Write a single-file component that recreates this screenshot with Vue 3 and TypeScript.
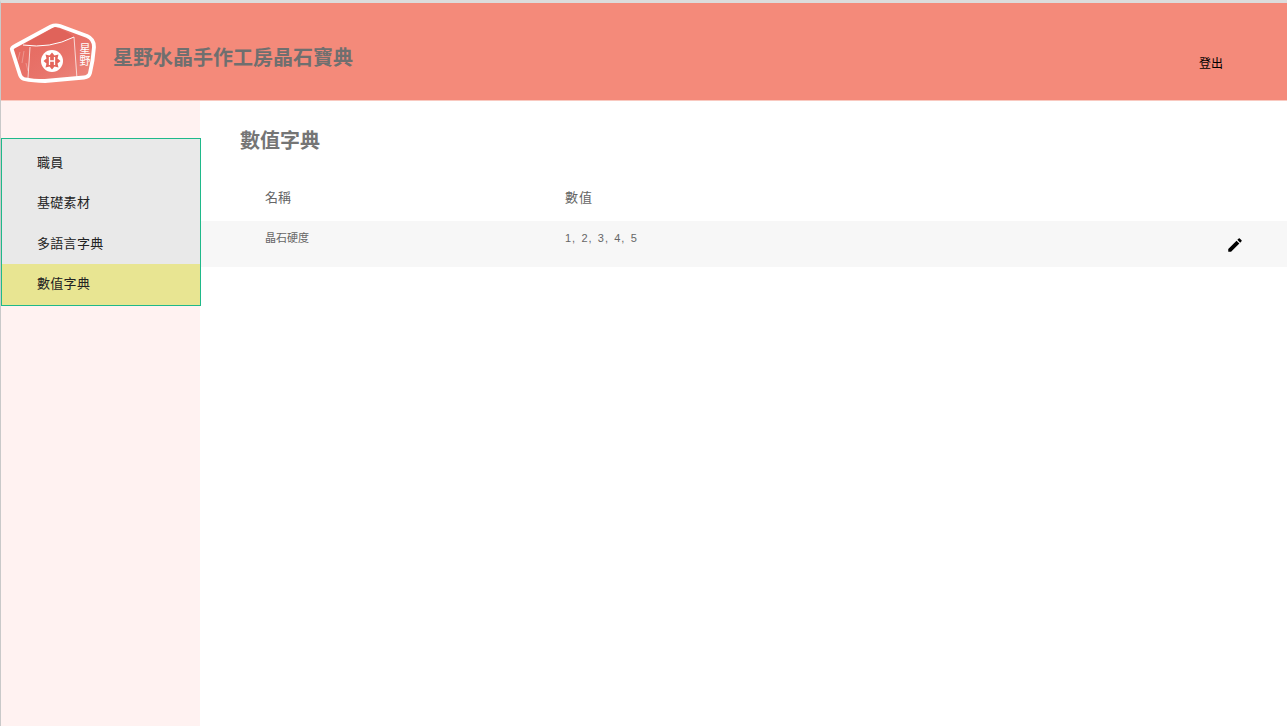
<template>
  <div class="page">
    <header class="top-bar">
      <svg class="logo" width="90" height="66" viewBox="0 0 90 66">
        <defs>
          <linearGradient id="stone" x1="0" y1="0" x2="1" y2="1">
            <stop offset="0" stop-color="#e4655b" />
            <stop offset="0.6" stop-color="#e8736a" />
            <stop offset="1" stop-color="#ec8a7f" />
          </linearGradient>
        </defs>
        <path
          d="M3 29 Q2 27 6 25 L42 5.500 Q46 3.500 51 5 L78 15 Q85 18 85 26 Q84 40 81 52 Q80 56 75 56.500 L36 60 Q24 60 15 58 Q12 57 11 54 Z"
          fill="url(#stone)"
          stroke="#fff"
          stroke-width="3.800"
          stroke-linejoin="round"
        />
        <path d="M14 24 Q41 28 65 16 Q56 9 46 6 Z" fill="#e0635a" />
        <path d="M14 24 Q41 28 65 16" fill="none" stroke="#fff" stroke-width="1" />
        <path d="M21 26 L19 57" fill="none" stroke="#fff" stroke-width="0.800" opacity="0.900" />
        <path d="M65 16 L68 58" fill="none" stroke="#fff" stroke-width="0.800" opacity="0.900" />
        <path d="M11 31 L9 39 M15 30 L13 42 M17 42 L19 50" fill="none" stroke="#fff" stroke-width="0.500" opacity="0.550" />
        <circle cx="43" cy="40" r="11" fill="#fff" />
        <path
          d="M43 31.500 L45.500 34.500 L49.500 33.500 L48.500 37.500 L51.500 40 L48.500 42.500 L49.500 46.500 L45.500 45.500 L43 48.500 L40.500 45.500 L36.500 46.500 L37.500 42.500 L34.500 40 L37.500 37.500 L36.500 33.500 L40.500 34.500 Z"
          fill="#e4655b"
        />
        <path d="M40.500 36 V44 M45.500 36 V44 M40.500 40 H45.500" stroke="#fff" stroke-width="1.300" fill="none" />
        <text class="logo-name" x="76" y="22">星野</text>
      </svg>
      <h1 class="site-title">星野水晶手作工房晶石寶典</h1>
      <a class="logout">登出</a>
    </header>

    <div class="body-row">
      <aside class="sidebar">
        <nav class="menu">
          <div
            v-for="item in menuItems"
            :key="item"
            class="menu-item"
            :class="{ 'is-active': item === activeItem }"
          >
            {{ item }}
          </div>
        </nav>
      </aside>

      <main class="content">
        <h2 class="page-title">數值字典</h2>
        <div class="table-head">
          <span class="col-name">名稱</span>
          <span class="col-value">數值</span>
        </div>
        <div v-for="row in rows" :key="row.name" class="table-row">
          <span class="col-name">{{ row.name }}</span>
          <span class="col-value">{{ row.values.join(', ') }}</span>
          <svg class="edit-icon" width="24" height="24" viewBox="0 0 24 24">
            <path
              d="M3 17.250V21h3.750L17.810 9.940l-3.750-3.750L3 17.250zM20.710 7.040a1 1 0 0 0 0-1.410l-2.340-2.340a1 1 0 0 0-1.410 0l-1.830 1.830 3.750 3.750 1.830-1.830z"
              fill="#000"
            />
          </svg>
        </div>
      </main>
    </div>
  </div>
</template>

<script setup lang="ts">
interface ValueRow {
  name: string
  values: number[]
}

const menuItems: string[] = ['職員', '基礎素材', '多語言字典', '數值字典']
const activeItem = '數值字典'

const rows: ValueRow[] = [{ name: '晶石硬度', values: [1, 2, 3, 4, 5] }]
</script>

<style scoped>
.page {
  display: flex;
  flex-direction: column;
  height: 726px;
  overflow: hidden;
  box-sizing: border-box;
  border-top: 3px solid #dcdcdc;
  border-left: 1px solid #c9c9c9;
  font-family: "Liberation Sans", "Noto Sans CJK TC", sans-serif;
  background: #fff;
}

.top-bar {
  display: flex;
  align-items: center;
  flex-shrink: 0;
  height: 98px;
  box-sizing: border-box;
  padding-left: 8px;
  background: #f48a7a;
  border-bottom: 1px solid #f9c9c0;
}

.logo {
  flex-shrink: 0;
  margin-top: 4px;
}

.logo-name {
  font-size: 11px;
  fill: #fff;
  writing-mode: vertical-rl;
  letter-spacing: 1px;
  font-family: "Noto Sans CJK TC", sans-serif;
}

.site-title {
  margin: 9px 0 0 14px;
  font-size: 20px;
  font-weight: 700;
  color: #6f6f6f;
  white-space: nowrap;
}

.logout {
  margin-left: auto;
  margin-right: 64px;
  margin-top: 22px;
  font-size: 12px;
  color: #000;
}

.body-row {
  display: flex;
  flex: 1;
  min-height: 0;
}

.sidebar {
  flex-shrink: 0;
  width: 199px;
  padding-top: 37px;
  background: #fff2f1;
}

.menu {
  width: 200px;
  position: relative;
  z-index: 1;
  box-sizing: border-box;
  padding-top: 2px;
  border: 1px solid #1fb98a;
  background: #e9e9e9;
}

.menu-item {
  display: flex;
  align-items: center;
  height: 40.500px;
  padding-left: 35px;
  box-sizing: border-box;
  font-size: 13px;
  letter-spacing: 0.300px;
  color: #222;
}

.menu-item.is-active {
  height: 41px;
  margin-top: 1.500px;
  padding-bottom: 4px;
  background: #e8e592;
}

.content {
  flex: 1;
  min-width: 0;
}

.page-title {
  margin: 26px 0 0 40px;
  font-size: 20px;
  line-height: 28px;
  font-weight: 700;
  color: #757575;
}

.table-head {
  display: flex;
  align-items: center;
  height: 46px;
  box-sizing: border-box;
  margin-top: 20px;
  padding: 0 0 4px 65px;
  font-size: 13px;
  color: #666;
}

.table-row {
  display: flex;
  align-items: flex-start;
  position: relative;
  height: 46px;
  box-sizing: border-box;
  padding: 9px 0 0 65px;
  background: #f7f7f7;
  font-size: 11px;
  line-height: 16px;
  color: #666;
}

.col-name {
  width: 300px;
  flex-shrink: 0;
}

.col-value {
  letter-spacing: 0.900px;
  word-spacing: 1.500px;
}

.edit-icon {
  position: absolute;
  right: 43px;
  top: 15px;
  width: 18px;
  height: 18px;
}
</style>

<style>
html,
body {
  margin: 0;
  overflow: hidden;
}
</style>
